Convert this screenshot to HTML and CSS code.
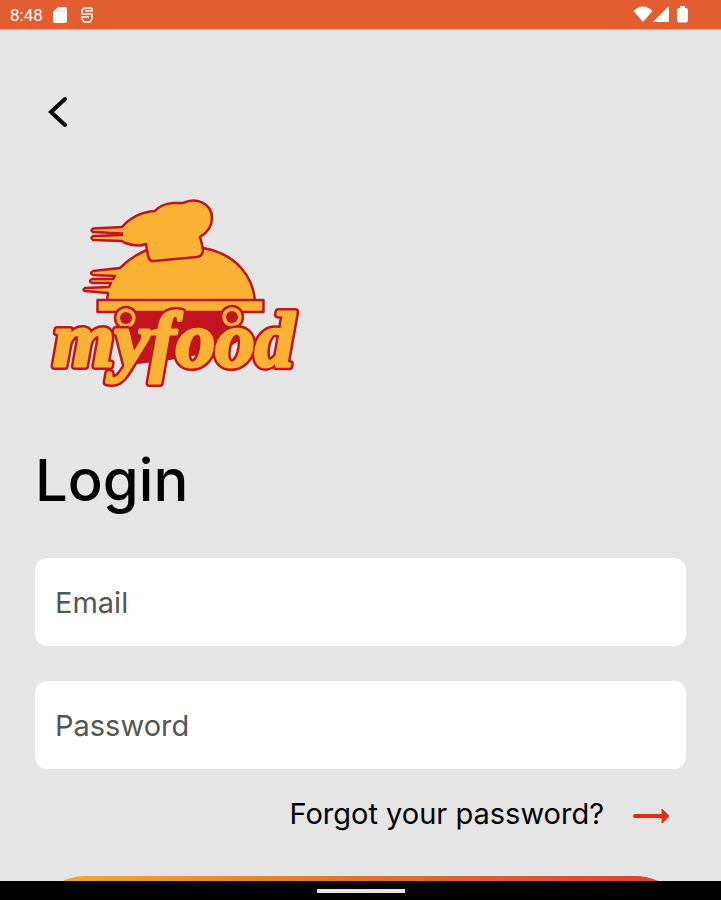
FILE: index.html
```html
<!DOCTYPE html>
<html lang="en">
<head>
<meta charset="utf-8">
<meta name="viewport" content="width=device-width, initial-scale=1">
<title>myfood</title>
<link rel="stylesheet" href="styles.css">
</head>
<body>
<header class="status">
  <div class="status-group">
    <span class="clock">8:48</span>
    <svg class="sd" width="14" height="16" viewBox="0 0 14 16" aria-hidden="true"><path d="M5 0h7a2 2 0 0 1 2 2v12a2 2 0 0 1-2 2H2a2 2 0 0 1-2-2V5z" fill="#fff"/><path d="M5 3v2M8 3v2M11 3v2" stroke="#f0b39b"/></svg>
    <svg class="app" width="12" height="16" viewBox="0 0 12 16" fill="none" stroke="#fff" stroke-width="1.500" aria-hidden="true"><path d="M11 1H3L1 3v4h10v5L9 15H3l-2-3v-2h7M11 1v3H4"/></svg>
  </div>
  <div class="status-group">
    <svg width="20" height="17" viewBox="0 0 20 17" aria-hidden="true"><path d="M0.500 5Q10-4 19.500 5L10 16z" fill="#fff"/></svg>
    <svg width="17" height="17" viewBox="0 0 17 17" aria-hidden="true"><path d="M16 0v16H0z" fill="#fff"/></svg>
    <svg class="battery" width="11" height="17" viewBox="0 0 11 17" aria-hidden="true"><path d="M3 0h5v2h1.500L11 3.500V15l-1.500 1.500h-8L0 15V3.500L1.500 2H3z" fill="#fff"/></svg>
  </div>
</header>
<main class="screen">
  <button class="back" type="button" aria-label="Back">
    <svg width="20" height="32" viewBox="0 0 20 32" aria-hidden="true"><path d="M17 3L3 16l14 13" fill="none" stroke="#000" stroke-width="4" stroke-linecap="round"/></svg>
  </button>
  <svg class="logo" width="264" height="200" viewBox="40 192 264 200" role="img" aria-label="myfood">
    <path d="M118 312H240V340L225 350 170 360 130 365 120 340z" fill="#c2141f"/>
    <g fill="#f9b233" stroke="#c2141f" stroke-width="2.500" stroke-linejoin="round">
      <path d="M147 250Q132 256 120 268L93 271Q89 273 93 275L115 276 113 279 92 279Q88 281 92 283L111 283 109 287 85 288Q82 290 85 291L108 293 107 301H255C253 277 237 254 203 248z"/>
      <path d="M93 228.500L122 227C130 218 141 212 155 211Q161 204 173 203L183 203C196 197 212 203 212 218Q212 230 200 237Q202 243 203 250Q203 256 197 257L154 261Q149 262 148 255L146 244C139 247 131 245 125 243L122 241 93 240Q90 238 93 236L122 235 122 233.500 93 232Q90 230 93 228.500z"/>
      <path d="M97.500 300H263.500V312H97.500z"/>
      <circle cx="126" cy="318" r="11"/><circle cx="232" cy="317" r="11"/>
    </g>
    <g fill="#c2141f"><circle cx="126" cy="318" r="6"/><circle cx="232" cy="317" r="6"/></g>
    <g class="word word-edge"><text id="word" x="53" y="366">myfood</text></g>
    <use class="word word-face" href="#word"/>
  </svg>
  <h1>Login</h1>
  <form class="form">
    <input type="email" placeholder="Email" aria-label="Email">
    <input type="password" placeholder="Password" aria-label="Password">
    <a class="forgot" href="#">
      <span>Forgot your password?</span>
      <svg width="38" height="18" viewBox="0 0 38 18" aria-hidden="true"><path d="M3 11h27" stroke="#e52b17" stroke-width="4" stroke-linecap="round"/><path d="M30 4l7 7-7 7z" fill="#e52b17" stroke="#e52b17" stroke-linejoin="round"/></svg>
    </a>
    <button class="submit" type="submit" aria-label="Login"></button>
  </form>
</main>
<footer class="navbar"><div class="handle"></div></footer>
</body>
</html>
```
FILE: styles.css
```css
* {
  box-sizing: border-box;
}

body {
  margin: 0;
  height: 100vh;
  display: flex;
  flex-direction: column;
  background: #e5e5e5;
  color: #000;
  font-family: Inter, "Liberation Sans", sans-serif;
}

.status {
  flex: none;
  display: flex;
  align-items: center;
  justify-content: space-between;
  height: 30px;
  padding: 0 33px 0 10px;
  background: #e25d30;
  color: #fff;
  border-bottom: 1px solid #e9a58c;
}

.status-group {
  display: flex;
  align-items: center;
}

.clock {
  font: 17px/20px Roboto, sans-serif;
}

.sd {
  margin-left: 10px;
}

.app {
  margin-left: 14px;
}

.battery {
  margin-left: 7px;
}

.screen {
  flex: 1;
  min-height: 0;
  overflow: hidden;
  padding: 60px 35px 0;
}

.back {
  display: block;
  padding: 6px 13px;
  border: 0;
  background: none;
}

.back svg,
.logo {
  display: block;
}

.logo {
  margin: 58px 0 0 5px;
}

.word {
  font: italic bold 79px "Liberation Serif", serif;
  stroke-linejoin: round;
}

.word-edge {
  fill: #c2141f;
  stroke: #c2141f;
  stroke-width: 8px;
}

.word-face {
  fill: #f9b233;
  stroke: #f9b233;
  stroke-width: 3px;
}

h1 {
  margin: 52px 0 0;
  font-size: 58px;
  line-height: 72px;
  font-weight: 500;
}

.form {
  display: flex;
  flex-direction: column;
  margin-top: 42px;
}

.form input {
  width: 100%;
  height: 88px;
  margin-bottom: 35px;
  padding: 0 20px;
  border: 0;
  border-radius: 12px;
  background: #fff;
  font: 29px/36px Inter, "Liberation Sans", sans-serif;
}

.form input::placeholder {
  color: #555;
  opacity: 1;
}

.forgot {
  display: flex;
  align-items: center;
  justify-content: flex-end;
  gap: 28px;
  margin-top: -8px;
  padding-right: 16px;
  color: #000;
  font-size: 29px;
  line-height: 36px;
  text-decoration: none;
}

.submit {
  flex: none;
  height: 100px;
  margin-top: 44px;
  border: 0;
  border-radius: 50px;
  background: linear-gradient(90deg, #f5ad2d, #e27130 50%, #d9402b);
}

.navbar {
  flex: none;
  display: flex;
  align-items: center;
  justify-content: center;
  height: 19px;
  background: #000;
}

.handle {
  width: 88px;
  height: 4px;
  background: #e5e5e5;
}
```
